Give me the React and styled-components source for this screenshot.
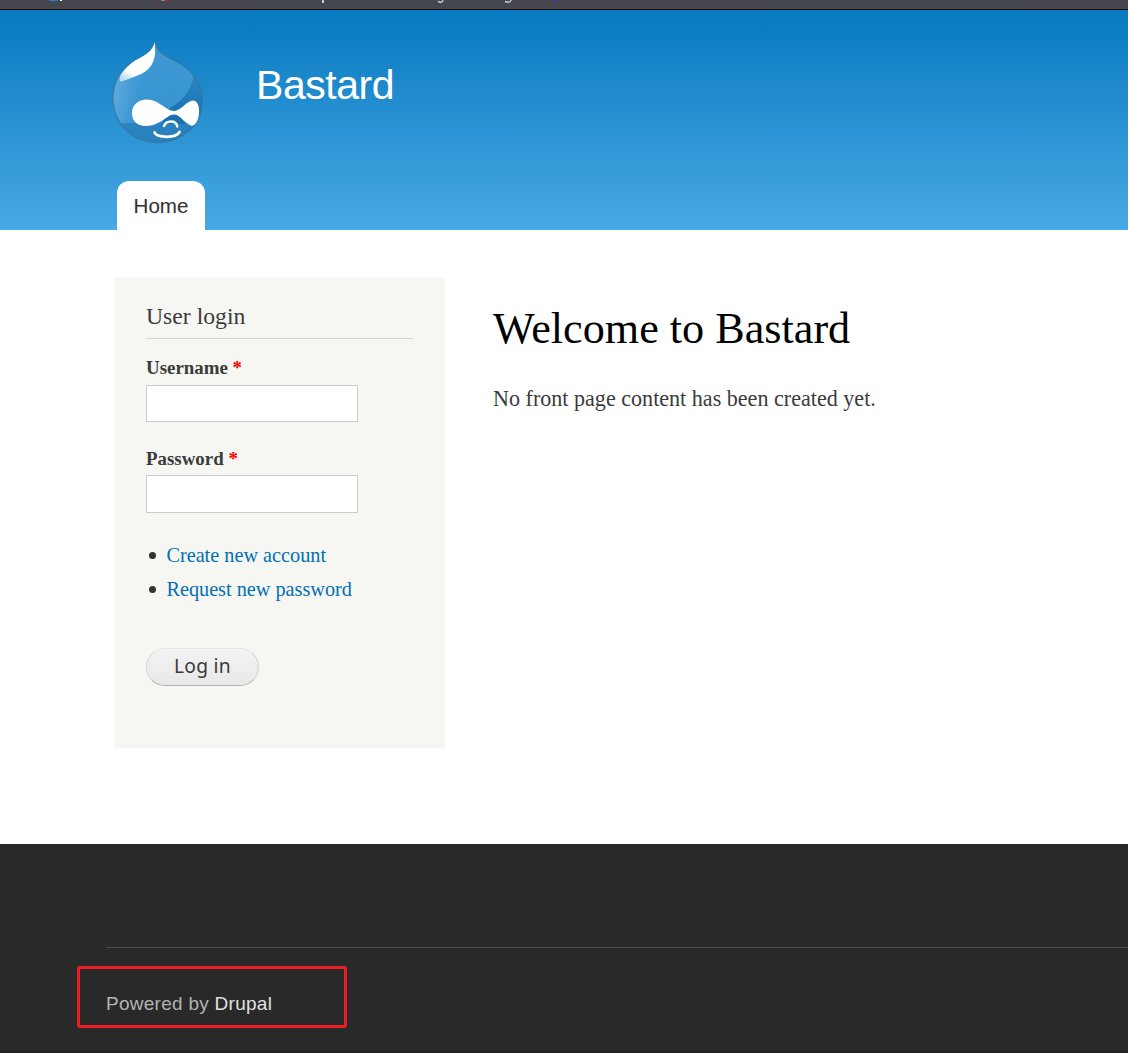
import React from 'react';
import styled, { createGlobalStyle } from 'styled-components';

const serif = '"Liberation Serif", Georgia, "Times New Roman", serif';
const sans = '"Liberation Sans", Helvetica, Arial, sans-serif';

const GlobalStyle = createGlobalStyle`
  * { box-sizing: border-box; }
  body {
    margin: 0;
    background: #fff;
    color: #3b3b3b;
    font-family: ${serif};
    overflow: hidden;
  }
  h1, h2, p, ul { margin: 0; padding: 0; font-weight: normal; }
  a { text-decoration: none; }
`;

const Page = styled.div`
  display: flex;
  flex-direction: column;
  height: 1053px;
  overflow: hidden;
`;

const BookmarksBar = styled.div`
  flex: none;
  height: 10px;
  background: #45464e;
  border-bottom: 1px solid #0c0c0d;
`;

const BarMarks = styled.svg`
  display: block;
`;

const Header = styled.header`
  flex: none;
  display: flex;
  flex-direction: column;
  justify-content: space-between;
  height: 220px;
  padding: 32px 0 0 112px;
  background: linear-gradient(#0779bf 0%, #48a9e4 100%);
`;

const Branding = styled.div`
  display: flex;
  align-items: flex-start;
  gap: 52px;
`;

const Logo = styled.svg`
  display: block;
  width: 92px;
  height: 102px;
`;

const SiteName = styled.h2`
  padding-top: 19px;
  font: 41px/48px ${sans};
  letter-spacing: -0.45px;
  color: #fff;
`;

const Tab = styled.a`
  align-self: flex-start;
  width: 88px;
  height: 49px;
  margin-left: 5px;
  border-radius: 12px 12px 0 0;
  background: #fff;
  color: #333;
  font: 20.6px/50px ${sans};
  text-align: center;
  text-shadow: 0 1px 0 #eee;
`;

const Main = styled.main`
  flex: none;
  display: flex;
  align-items: flex-start;
  gap: 48px;
  height: 614px;
  padding: 47px 0 0 114px;
`;

const Sidebar = styled.aside`
  width: 331px;
  height: 472px;
  padding: 23px 31px;
  background: #f6f6f2;
  border: 1px solid #f9f9f9;
`;

const BlockTitle = styled.h2`
  height: 38px;
  border-bottom: 1px solid #d6d6d6;
  font-size: 23.7px;
  line-height: 30px;
`;

const Field = styled.label`
  display: block;
  margin-top: ${(p) => p.$top}px;
  font-weight: bold;
  font-size: 18.9px;
  line-height: 24px;
`;

const Required = styled.span`
  color: #f00;
`;

const TextInput = styled.input`
  display: block;
  width: 212px;
  height: ${(p) => p.$height}px;
  margin-top: ${(p) => p.$gap}px;
  padding: 4px;
  border: 1px solid #ccc;
  background: #fff;
`;

const Links = styled.ul`
  margin-top: 25px;
  list-style: none;
`;

const LinkRow = styled.li`
  display: flex;
  align-items: center;
  gap: 10px;
  height: 34px;
  padding-left: 3.4px;
  font-size: 20.25px;
  line-height: 34px;

  &::before {
    content: '';
    width: 7px;
    height: 7px;
    border-radius: 50%;
    background: #333;
  }
`;

const BlueLink = styled.a`
  color: #0071b3;
`;

const Submit = styled.button`
  display: block;
  width: 113px;
  height: 38px;
  margin-top: 42px;
  padding: 0 0 2px;
  border: 1px solid #e4e4e4;
  border-bottom-color: #b4b4b4;
  border-left-color: #d2d2d2;
  border-right-color: #d2d2d2;
  border-radius: 19px;
  background: linear-gradient(#f3f3f3, #e8e8e8);
  color: #3a3a3a;
  font: 19.2px/34px "Noto Sans", sans-serif;
  letter-spacing: 0.3px;
`;

const Content = styled.section`
  padding-top: 26px;
`;

const PageTitle = styled.h1`
  color: #000;
  font-size: 44.2px;
  line-height: 52px;
`;

const Message = styled.p`
  margin-top: 28px;
  font-size: 22.1px;
  line-height: 32px;
`;

const Footer = styled.footer`
  flex: none;
  height: 209px;
  padding-top: 103px;
  background: #292929;
  border-bottom: 2px solid #201f22;
`;

const FooterRule = styled.div`
  height: 1px;
  margin-left: 106px;
  background: #4b4b4b;
`;

const Highlight = styled.div`
  display: flex;
  align-items: center;
  width: 270px;
  height: 62px;
  margin: 18px 0 0 77px;
  padding: 14px 0 0 26px;
  border: 3px solid #ee1c25;
  border-radius: 3px;
  color: #b3b3b3;
  font: 19px/26px ${sans};
  letter-spacing: 0.27px;
  white-space: pre;
`;

const FooterLink = styled.a`
  color: #e0e0e0;
`;

const outline = 'M42.5 -2C44 9 51 13 62 18.500C80 27 90.500 41 90.500 58C90.500 83 70 100.500 45.500 100.500C20 100.500 1 81 1 56C1 41 8 28 22 19C34 12 42 9 42.500 -2Z';

function DropletLogo() {
  return (
    <Logo viewBox="0 0 92 102">
      <defs>
        <linearGradient id="drop" x1="0" y1="0" x2="0.25" y2="1">
          <stop offset="0" stopColor="#3d96d1" />
          <stop offset="0.5" stopColor="#3c98d4" />
          <stop offset="1" stopColor="#3590cc" />
        </linearGradient>
        <linearGradient id="shine" gradientUnits="userSpaceOnUse" x1="30" y1="10" x2="12" y2="38">
          <stop offset="0" stopColor="#fff" />
          <stop offset="0.7" stopColor="#fff" />
          <stop offset="1" stopColor="#fff" stopOpacity="0.6" />
        </linearGradient>
        <linearGradient id="edge" x1="0" y1="0" x2="1" y2="0.15">
          <stop offset="0" stopColor="#7dbde7" stopOpacity="0.65" />
          <stop offset="0.35" stopColor="#7dbde7" stopOpacity="0" />
        </linearGradient>
        <linearGradient id="shade" x1="0.75" y1="0" x2="0.3" y2="1">
          <stop offset="0" stopColor="#2a85c2" />
          <stop offset="1" stopColor="#146fac" />
        </linearGradient>
        <clipPath id="dropClip">
          <path d={outline} />
        </clipPath>
      </defs>
      <g clipPath="url(#dropClip)">
        <rect y="-2" width="92" height="104" fill="url(#drop)" />
        <rect y="-2" width="92" height="104" fill="url(#edge)" />
        <path d="M82 31C80 48 71 59 58 66L50 82H92V31Z" fill="url(#shade)" />
        <path d="M0 82L20 81H92V102H0Z" fill="#2277b3" opacity="0.6" />
      </g>
      <path d={outline} fill="none" stroke="#3a6f95" strokeWidth="1.300" opacity="0.65" />
      <path d="M42.500 0C44 11 43 19 38 25C32 33 20 35 10 39.500C8 40 7 38 8 34.500C12 27 18 21.500 25 17.500C34 12.500 41 9 42.500 0Z" fill="url(#shine)" />
      <path d="M35 57.500C47 57.500 54 69 62 69C69 69 75 58.500 81 58.500C87 59 88 68 86.500 75C85 81 82 84.500 79 83.500C72 81 68 72.500 62 72.500C55 72.500 48 84 34 84C25 84 20 79 20 71C20 63 26 57.500 35 57.500Z" fill="#fff" />
      <path d="M52 84C54 78.500 64 77.500 65.300 84.500" fill="none" stroke="#fff" strokeWidth="2.400" strokeLinecap="round" />
      <path d="M42.500 90.500Q44 94.500 55 94.800Q65 94.500 67.500 90" fill="none" stroke="#fff" strokeWidth="2.700" strokeLinecap="round" />
    </Logo>
  );
}

export default function App() {
  return (
    <>
      <GlobalStyle />
      <Page>
        <BookmarksBar>
          <BarMarks width="1128" height="9">
            <path d="M49 0H58V1H49Z" fill="#2b79c2" />
            <path d="M60 0H62V1H60Z" fill="#fff" />
            <path d="M159 0H161L162 1H159Z" fill="#b0173a" />
            <path d="M161 0H165V1H161Z" fill="#85868b" />
            <path d="M165 0H169V1H166Z" fill="#c01f48" />
            <path d="M322 0H324V3H322Z" fill="#c9c9cc" />
            <path d="M438 1.500Q442.500 3.500 443 0M505 1.500Q510.500 3.500 511 0" fill="none" stroke="#d0d0d2" strokeWidth="1.400" />
            <path d="M553 0H557L555 2Z" fill="#5928c8" />
          </BarMarks>
        </BookmarksBar>
        <Header>
          <Branding>
            <DropletLogo />
            <SiteName>Bastard</SiteName>
          </Branding>
          <Tab>Home</Tab>
        </Header>
        <Main>
          <Sidebar>
            <BlockTitle>User login</BlockTitle>
            <Field $top={17}>
              Username <Required>*</Required>
              <TextInput type="text" $height={37} $gap={5} />
            </Field>
            <Field $top={25}>
              Password <Required>*</Required>
              <TextInput type="password" $height={38} $gap={4} />
            </Field>
            <Links>
              <LinkRow><BlueLink>Create new account</BlueLink></LinkRow>
              <LinkRow><BlueLink>Request new password</BlueLink></LinkRow>
            </Links>
            <Submit>Log in</Submit>
          </Sidebar>
          <Content>
            <PageTitle>Welcome to Bastard</PageTitle>
            <Message>No front page content has been created yet.</Message>
          </Content>
        </Main>
        <Footer>
          <FooterRule />
          <Highlight>Powered by <FooterLink>Drupal</FooterLink></Highlight>
        </Footer>
      </Page>
    </>
  );
}
